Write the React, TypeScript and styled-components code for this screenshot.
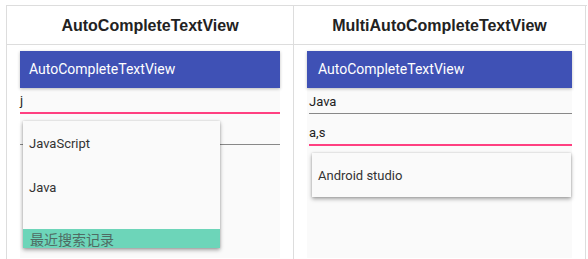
import React from "react";
import styled, { createGlobalStyle } from "styled-components";

const Global = createGlobalStyle`
  html, body { margin: 0; padding: 0; background: #ffffff; }
  body { width: 588px; height: 259px; overflow: hidden; }
`;

const Table = styled.div`
  margin: 5px 0 0 6px;
  width: 580px;
  display: grid;
  grid-template-columns: 287px 292px;
  border-top: 1px solid #dddddd;
  border-left: 1px solid #dddddd;
`;

const HeadCell = styled.div`
  height: 37px;
  border-right: 1px solid #dddddd;
  border-bottom: 1px solid #dddddd;
  display: flex;
  align-items: center;
  justify-content: center;
  font-family: "Liberation Sans", Arial, sans-serif;
  font-weight: bold;
  font-size: 16px;
  color: #222222;
  padding-top: 1px;
`;

const BodyCell = styled.div`
  border-right: 1px solid #dddddd;
  height: 215px;
  padding: 6px 0 0 13px;
`;

const Phone = styled.div<{ $w: number }>`
  width: ${(p) => p.$w}px;
  height: 207px;
  background: #fafafa;
  position: relative;
  font-family: Roboto, "Noto Sans", sans-serif;
`;

const AppBar = styled.div<{ $pad: number }>`
  height: 37px;
  background: #3f51b5;
  color: #ffffff;
  font-size: 14px;
  display: flex;
  align-items: center;
  padding-left: ${(p) => p.$pad}px;
  padding-bottom: 1px;
  box-sizing: border-box;
  box-shadow: 0 1px 3px rgba(0, 0, 0, 0.25);
`;

const Field = styled.div<{ $focus?: boolean; $mt: number; $ml: number }>`
  margin: ${(p) => p.$mt}px 0 0 ${(p) => p.$ml}px;
  height: 24px;
  display: flex;
  align-items: center;
  font-size: 13px;
  color: #222222;
  border-bottom: ${(p) => (p.$focus ? "2px solid #ff4081" : "1px solid #888888")};
`;

const Popup = styled.div<{ $left: number; $top: number; $w: number }>`
  position: absolute;
  left: ${(p) => p.$left}px;
  top: ${(p) => p.$top}px;
  width: ${(p) => p.$w}px;
  background: #fafafa;
  box-shadow: 0 2px 4px rgba(0, 0, 0, 0.35), 0 0 2px rgba(0, 0, 0, 0.15);
  display: flex;
  flex-direction: column;
`;

const Item = styled.div<{ $pad: number }>`
  height: 44px;
  display: flex;
  align-items: center;
  padding-left: ${(p) => p.$pad}px;
  font-size: 13px;
  color: #333333;
`;

const Spacer = styled.div`
  height: 20px;
`;

const Footer = styled.div`
  height: 19px;
  background: #6dd5b9;
  display: flex;
  align-items: center;
  padding-left: 7px;
  font-family: "Noto Sans CJK SC", sans-serif;
  font-size: 14px;
  color: #4f6b63;
`;

export default function App() {
  return (
    <>
      <Global />
      <Table>
        <HeadCell>AutoCompleteTextView</HeadCell>
        <HeadCell>MultiAutoCompleteTextView</HeadCell>
        <BodyCell>
          <Phone $w={260}>
            <AppBar $pad={9}>AutoCompleteTextView</AppBar>
            <Field $focus $mt={0} $ml={0}>j</Field>
            <Field $mt={6} $ml={0}></Field>
            <Popup $left={3} $top={70} $w={197}>
              <Item $pad={6}>JavaScript</Item>
              <Item $pad={6}>Java</Item>
              <Spacer />
              <Footer>最近搜索记录</Footer>
            </Popup>
          </Phone>
        </BodyCell>
        <BodyCell>
          <Phone $w={265}>
            <AppBar $pad={11}>AutoCompleteTextView</AppBar>
            <Field $mt={1} $ml={2}>Java</Field>
            <Field $focus $mt={6} $ml={2}>a,s</Field>
            <Popup $left={5} $top={102} $w={259}>
              <Item $pad={6}>Android studio</Item>
            </Popup>
          </Phone>
        </BodyCell>
      </Table>
    </>
  );
}
